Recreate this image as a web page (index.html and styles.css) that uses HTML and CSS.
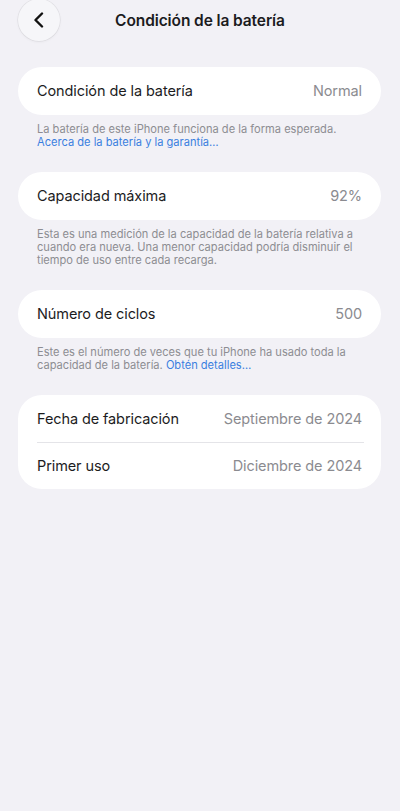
FILE: index.html
```html
<!DOCTYPE html>
<html lang="es">
<head>
<meta charset="utf-8">
<link rel="stylesheet" href="styles.css">
</head>
<body>
<header class="nav">
  <button class="back" aria-label="Atrás">
    <svg width="14" height="16" viewBox="0 0 14 16"><path d="M10 1.5 L3.5 8 L10 14.5" fill="none" stroke="#111" stroke-width="2.4" stroke-linecap="round" stroke-linejoin="round"/></svg>
  </button>
  <h1 class="title">Condición de la batería</h1>
</header>
<main class="content">
  <section class="card">
    <div class="row"><span class="label">Condición de la batería</span><span class="value">Normal</span></div>
  </section>
  <p class="note">La batería de este iPhone funciona de la forma esperada.<br><span class="link">Acerca de la batería y la garantía…</span></p>

  <section class="card">
    <div class="row"><span class="label">Capacidad máxima</span><span class="value">92%</span></div>
  </section>
  <p class="note">Esta es una medición de la capacidad de la batería relativa a cuando era nueva. Una menor capacidad podría disminuir el tiempo de uso entre cada recarga.</p>

  <section class="card">
    <div class="row"><span class="label">Número de ciclos</span><span class="value">500</span></div>
  </section>
  <p class="note"><span>Este es el número de veces que tu iPhone ha usado toda la</span><br><span>capacidad de la batería.</span> <span class="link">Obtén detalles…</span></p>

  <section class="card card-multi">
    <div class="row"><span class="label">Fecha de fabricación</span><span class="value">Septiembre de 2024</span></div>
    <div class="divider"></div>
    <div class="row"><span class="label">Primer uso</span><span class="value">Diciembre de 2024</span></div>
  </section>
</main>
</body>
</html>
```

FILE: styles.css
```css
* { box-sizing: border-box; }
html, body {
  margin: 0;
  padding: 0;
  background: #f2f1f6;
  font-family: "Inter", "Liberation Sans", sans-serif;
  color: #1c1c1e;
  height: 100%;
}
.nav {
  position: relative;
  height: 42px;
  display: flex;
  align-items: center;
  justify-content: center;
  margin-bottom: 25px;
}
.back {
  position: absolute;
  left: 18px;
  top: -1px;
  width: 42px;
  height: 42px;
  border-radius: 50%;
  border: none;
  padding: 0;
  background: #f6f6f9;
  box-shadow: 0 0 0 0.6px rgba(0,0,0,0.07), 0 1px 3px rgba(0,0,0,0.05);
  display: flex;
  align-items: center;
  justify-content: center;
}
.title {
  margin: 0;
  font-size: 15.5px;
  font-weight: 600;
  letter-spacing: -0.1px;
  position: relative;
  top: -1px;
}
.content {
  padding: 0 19px 0 18px;
}
.card {
  background: #fff;
  border-radius: 24px;
  padding: 0 19px;
}
.row {
  height: 47.5px;
  display: flex;
  align-items: center;
  justify-content: space-between;
}
.card-multi .row {
  height: 46.5px;
}
.label {
  font-size: 14.5px;
  letter-spacing: -0.1px;
}
.value {
  font-size: 14.5px;
  color: #8b8b90;
  letter-spacing: -0.1px;
}
.divider {
  height: 1px;
  background: #e4e4e8;
  margin-right: -2px;
}
.note {
  margin: 8.5px 0 23px;
  padding: 0 19px;
  font-size: 11.1px;
  line-height: 13px;
  color: #8d8d92;
}
.link {
  color: #3a7fe0;
}
```
